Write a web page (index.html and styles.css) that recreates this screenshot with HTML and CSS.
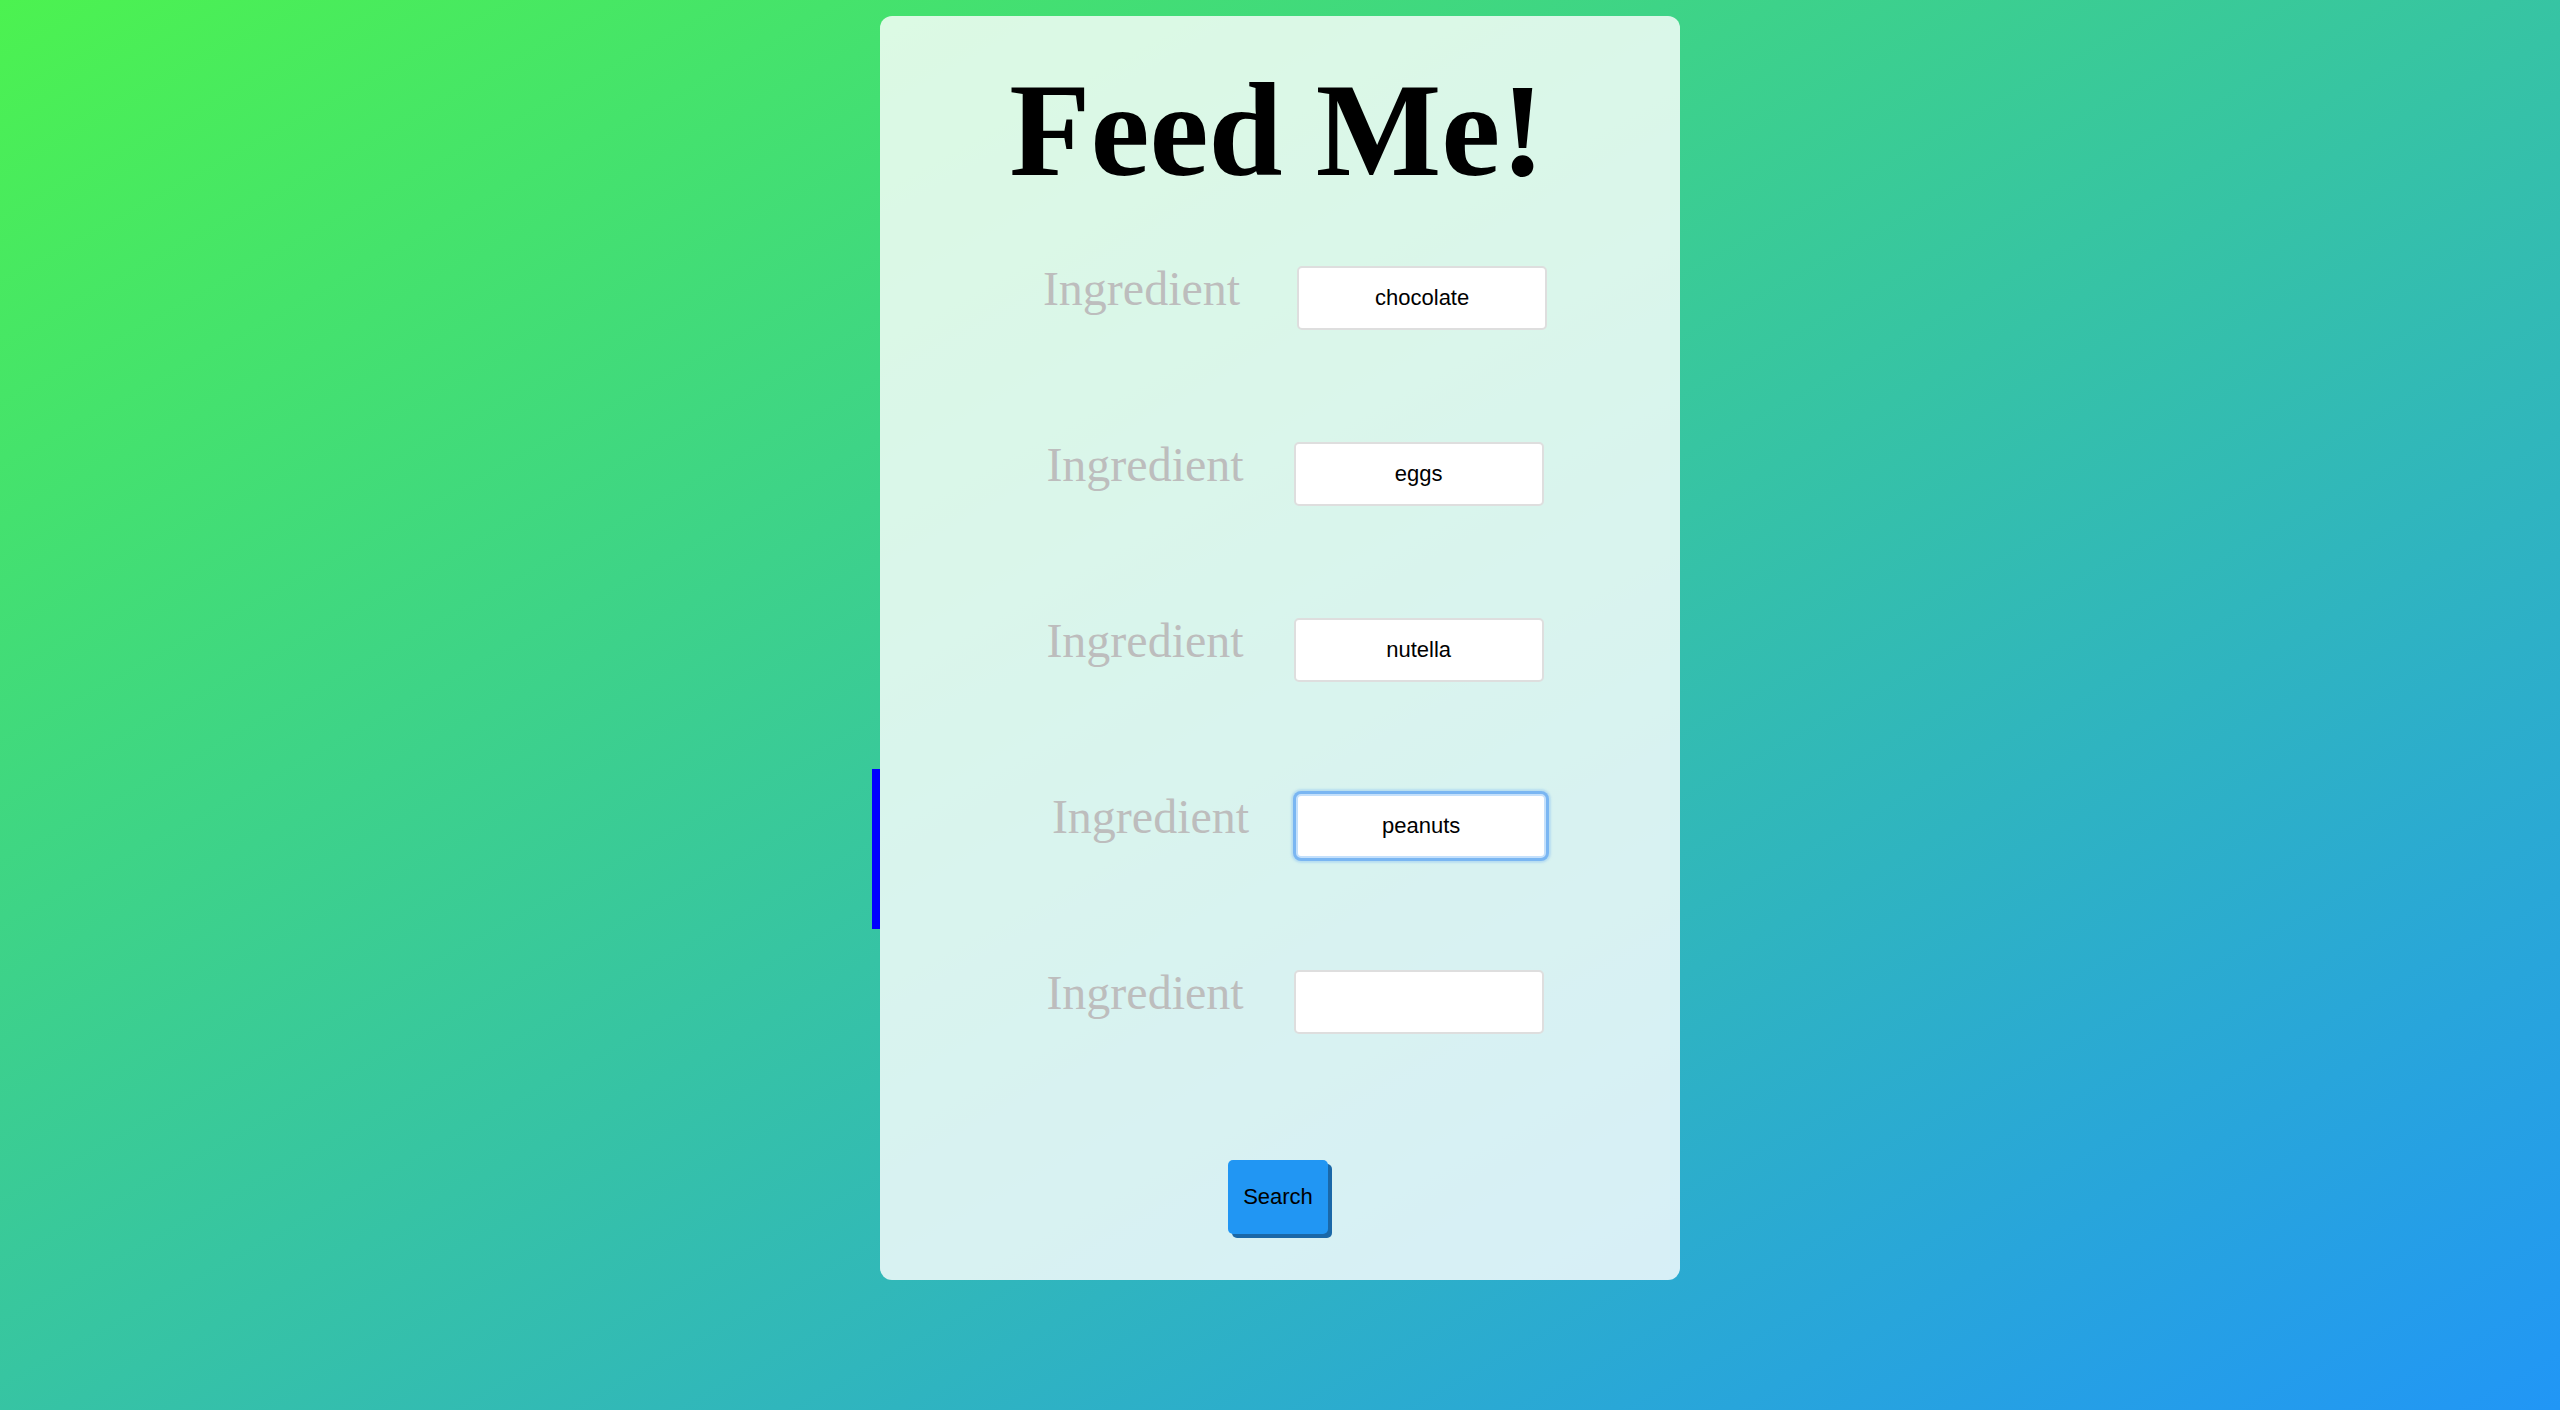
FILE: index.html
```html
<!DOCTYPE html>
<html lang="en">
<head>
<meta charset="utf-8">
<title>Feed Me!</title>
<link rel="stylesheet" href="styles.css">
</head>
<body>
<main class="card">
  <h1 class="title">Feed Me!</h1>
  <form class="form">
    <div class="row row--first">
      <label class="label">Ingredient</label>
      <input class="field" type="text" value="chocolate">
    </div>
    <div class="row">
      <label class="label">Ingredient</label>
      <input class="field" type="text" value="eggs">
    </div>
    <div class="row">
      <label class="label">Ingredient</label>
      <input class="field" type="text" value="nutella">
    </div>
    <div class="row row--focus">
      <label class="label">Ingredient</label>
      <input class="field field--focus" type="text" value="peanuts">
    </div>
    <div class="row">
      <label class="label">Ingredient</label>
      <input class="field" type="text" value="">
    </div>
    <div class="actions">
      <button class="search" type="button">Search</button>
    </div>
  </form>
</main>
</body>
</html>
```

FILE: styles.css
```css
html {
  min-height: 100%;
  background: linear-gradient(to bottom right, #4cf250, #2196f6);
}

body {
  margin: 0;
  min-height: 1410px;
  padding-top: 16px;
  box-sizing: border-box;
  font-family: "Liberation Serif", "Times New Roman", serif;
}

.card {
  width: 800px;
  margin: 0 auto;
  box-sizing: border-box;
  padding: 39px 0 46px;
  background: rgba(255, 255, 255, 0.81);
  border-radius: 12px;
}

.title {
  margin: 0 0 60px;
  text-align: center;
  font-family: "Liberation Serif", "Times New Roman", serif;
  font-weight: bold;
  font-size: 133px;
  line-height: 150px;
  color: #000;
  padding-right: 6px;
}

.form {
  display: flex;
  flex-direction: column;
  gap: 112px;
}

.row {
  position: relative;
  display: flex;
  align-items: baseline;
  justify-content: center;
  gap: 50px;
  height: 64px;
  padding-left: 30px;
}

.row--first {
  gap: 57px;
}

.row--focus {
  padding-left: 38px;
  gap: 47px;
}

.row--focus::before {
  content: "";
  position: absolute;
  left: -8px;
  top: -24px;
  width: 8px;
  height: 160px;
  background: #0000ff;
}

.label {
  font-family: "Liberation Serif", "Times New Roman", serif;
  font-size: 48px;
  line-height: 1;
  color: #bdbdbd;
}

.field {
  width: 250px;
  height: 64px;
  box-sizing: border-box;
  margin: 0;
  padding: 0 8px;
  border: 2px solid #dedede;
  border-radius: 5px;
  background: #fff;
  font-family: "Liberation Sans", Arial, sans-serif;
  font-size: 22px;
  color: #000;
  text-align: center;
  outline: none;
}

.field--focus {
  border-color: #c4e0fb;
  box-shadow: 0 0 0 3px #7ab6f2, 0 0 2px 5px rgba(122, 182, 242, 0.35);
}

.actions {
  display: flex;
  justify-content: center;
  margin-top: 15px;
  padding-right: 4px;
}

.search {
  margin: 0;
  padding: 24px 15px;
  border: none;
  border-radius: 5px;
  background: #2196f3;
  box-shadow: 4px 4px 0 #1a68a8;
  font-family: "Liberation Sans", Arial, sans-serif;
  font-size: 22px;
  line-height: 26px;
  color: #000;
  cursor: pointer;
}
```
